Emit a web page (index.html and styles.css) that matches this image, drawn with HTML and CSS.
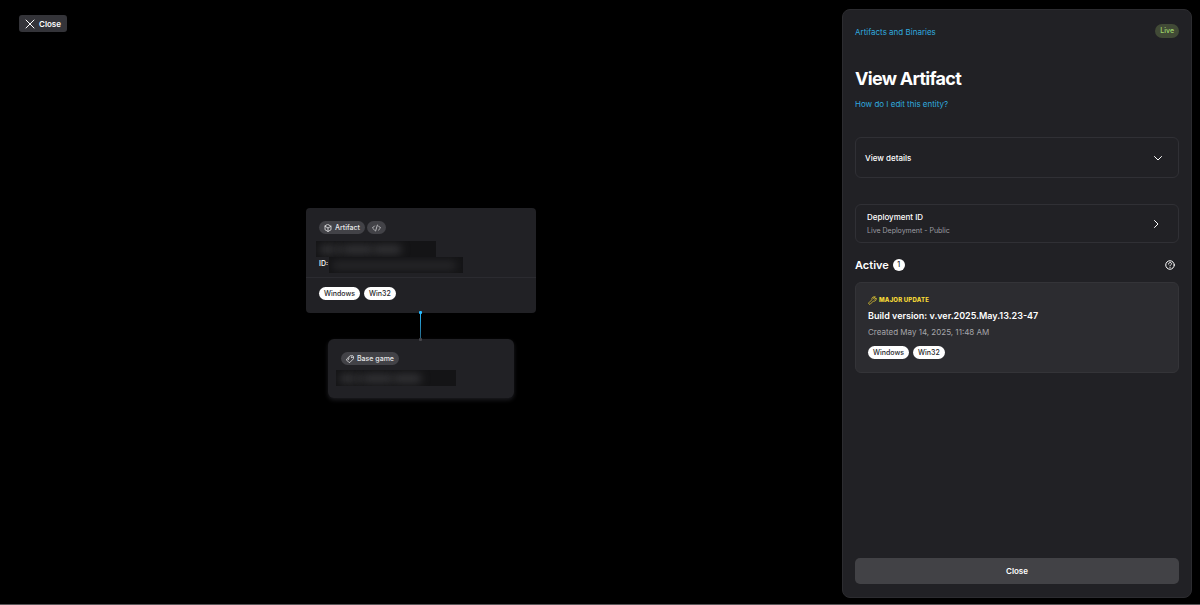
FILE: index.html
```html
<!DOCTYPE html>
<html lang="en">
<head>
	<meta charset="UTF-8">
	<meta name="viewport" content="width=device-width, initial-scale=1.0">
	<title>View Artifact</title>
	<link rel="stylesheet" href="styles.css">
</head>
<body>
	<div class="app">
		<main class="canvas">
			<button class="close-top" type="button">
				<svg class="icon-close" viewBox="0 0 10 10"><path d="M1 1l8 8M9 1l-8 8"/></svg>
				Close
			</button>

			<!-- graph nodes -->
			<section class="node node-artifact">
				<div class="node-head">
					<div class="tags">
						<span class="tag">
							<svg class="icon" viewBox="0 0 16 16"><path d="M8 1l6 3.500v7L8 15l-6-3.500v-7zM2 4.500L8 8l6-3.500M8 8v7"/></svg>
							Artifact
						</span>
						<span class="tag tag-code">
							<svg class="icon icon-code" viewBox="0 0 20 16"><path d="M5.500 3.500L1 8l4.500 4.500M14.500 3.500L19 8l-4.500 4.500M12 1.500l-4 13"/></svg>
						</span>
					</div>
					<div class="redacted redacted-name"><i></i><i></i><i></i><i></i></div>
					<div class="id-row">
						<span>ID:</span>
						<div class="redacted redacted-id"><i></i></div>
					</div>
				</div>
				<div class="node-foot">
					<span class="chip">Windows</span>
					<span class="chip">Win32</span>
				</div>
			</section>
			<section class="node node-game">
				<div class="tags">
					<span class="tag">
						<svg class="icon" viewBox="0 0 16 16"><path d="M9 1.500h5l1 1v5l-7.500 7.500-2-.500L1 10l.500-1.500zM6 6L4.500 9.500"/><circle cx="11.500" cy="4.500" r=".8"/></svg>
						Base game
					</span>
				</div>
				<div class="redacted redacted-name"><i></i><i></i><i></i><i></i></div>
			</section>
			<div class="edge"></div>
		</main>

		<aside class="panel">
			<div class="panel-top">
				<a class="link" href="#">Artifacts and Binaries</a>
				<span class="status">Live</span>
			</div>
			<h1>View Artifact</h1>
			<a class="link" href="#">How do I edit this entity?</a>

			<button class="row row-details" type="button">
				<span>View details</span>
				<svg class="chevron" viewBox="0 0 10 10"><path d="M1.500 3.500L5 7l3.500-3.500"/></svg>
			</button>

			<button class="row row-deployment" type="button">
				<span class="row-text">
					<span>Deployment ID</span>
					<small>Live Deployment - Public</small>
				</span>
				<svg class="chevron" viewBox="0 0 10 10"><path d="M3.500 1.500L7 5 3.500 8.500"/></svg>
			</button>

			<div class="active-head">
				<h2>Active</h2>
				<span class="count">1</span>
				<button class="help" type="button" aria-label="Help">
					<svg viewBox="0 0 20 20"><circle cx="10" cy="10" r="8.500"/><path d="M7 8c0-4 6-4 6-.500 0 2-3 2-3 4M10 14.500v.500"/></svg>
				</button>
			</div>

			<article class="build">
				<div class="update">
					<svg class="icon-wrench" viewBox="0 0 16 16"><path d="M12.500 1.500C9 .500 6 3 7 6.500L1.500 12c-1 1.500.500 3.500 2.500 2.500L9.500 9c3.500 1 6-2 5-5.500L12 6l-2-2z"/></svg>
					MAJOR UPDATE
				</div>
				<h3>Build version: v.ver.2025.May.13.23-47</h3>
				<p>Created May 14, 2025, 11:48 AM</p>
				<div class="chips">
					<span class="chip">Windows</span>
					<span class="chip">Win32</span>
				</div>
			</article>

			<button class="close-bottom" type="button">Close</button>
		</aside>
	</div>
</body>
</html>
```

FILE: styles.css
```css
* {
	box-sizing: border-box;
}

body {
	margin: 0;
	background: #000;
	color: #fff;
	font-family: Inter, "Liberation Sans", sans-serif;
	font-size: 8px;
	line-height: 12px;
}

h1, h2, h3, p {
	margin: 0;
}

button {
	border: 0;
	color: inherit;
	cursor: pointer;
	font: inherit;
}

svg {
	display: block;
	fill: none;
	flex: none;
	stroke: currentColor;
	stroke-linecap: round;
	stroke-linejoin: round;
}

.app {
	border-bottom: 1px solid #5a5558;
	display: flex;
	min-height: 100vh;
}

/* Canvas */

.canvas {
	flex: 1;
	padding: 15px 19px;
	position: relative;
}

.close-top {
	align-items: center;
	background: #343439;
	border-radius: 3px;
	display: flex;
	font-weight: 600;
	gap: 4px;
	height: 17px;
	padding: 0 6px;
}

.icon-close {
	height: 10px;
	width: 10px;
}

.node {
	background: #212125;
	position: absolute;
}

.node-artifact {
	border-radius: 4px;
	left: 306px;
	top: 208px;
	width: 230px;
}

.node-head {
	border-bottom: 1px solid #2b2b30;
	padding: 13px 13px 4px;
}

.node-foot {
	padding: 9px 13px 13px;
}

.node-foot, .chips, .tags {
	display: flex;
}

.node-foot, .chips {
	gap: 4px;
}

.tags {
	gap: 2px;
}

.tag {
	align-items: center;
	background: #424247;
	border-radius: 7px;
	color: #e8e8ea;
	display: flex;
	font-size: 7px;
	font-weight: 500;
	gap: 3px;
	height: 13px;
	padding: 0 5px;
}

.tag-code {
	padding: 0 5px;
}

.icon {
	height: 8px;
	stroke-width: 1.6;
	width: 8px;
}

.icon-code {
	width: 9px;
}

.chip {
	background: #fff;
	border-radius: 7px;
	color: #26262a;
	font-size: 7px;
	font-weight: 500;
	line-height: 13px;
	padding: 0 5px;
}

.redacted {
	align-items: center;
	background: #141416;
	display: flex;
	height: 16px;
	overflow: hidden;
}

.redacted i {
	background: #343437;
	border-radius: 3px;
	filter: blur(4px);
	height: 9px;
}

.redacted-name {
	margin: 7px 0 0 -3px;
	padding-left: 4px;
	width: 120px;
}

.redacted-name i:nth-child(1) {
	width: 15px;
}

.redacted-name i:nth-child(2) {
	width: 8px;
}

.redacted-name i:nth-child(3) {
	width: 30px;
}

.redacted-name i:nth-child(4) {
	width: 28px;
}

.id-row {
	display: flex;
	font-size: 7px;
	font-weight: 500;
	gap: 1px;
	line-height: 14px;
}

.redacted-id {
	padding-left: 3px;
	width: 134px;
}

.redacted-id i {
	background: #27272a;
	width: 124px;
}

.edge {
	background: linear-gradient(#26bbff, #26627e);
	height: 27px;
	left: 420px;
	position: absolute;
	top: 312px;
	width: 1px;
}

.edge::before, .edge::after {
	background: #26bbff;
	border-radius: 1px;
	content: "";
	height: 3px;
	left: -1px;
	position: absolute;
	top: -1px;
	width: 3px;
}

.edge::after {
	background: #45454a;
	top: 26px;
}

.node-game {
	border-radius: 6px;
	box-shadow: 0 2px 4px #1c1c20;
	left: 328px;
	padding: 13px 13px 12px;
	top: 339px;
	width: 186px;
}

.node-game .redacted-name {
	margin: 5px 0 0 -5px;
}

/* Side panel */

.panel {
	background: #212125;
	border: 1px solid #2c2c30;
	border-radius: 8px;
	display: flex;
	flex: 0 0 350px;
	flex-direction: column;
	margin: 9px 8px 6px 0;
	padding: 14px 12px 13px;
}

.panel-top {
	align-items: end;
	display: flex;
	justify-content: space-between;
	margin: 0 0 31px;
}

.link {
	align-self: flex-start;
	color: #30a9df;
	text-decoration: none;
}

.panel-top .link {
	align-self: flex-end;
}

.status {
	background: #414a36;
	border-radius: 7px;
	color: #9ed66b;
	font-size: 7px;
	font-weight: 500;
	line-height: 14px;
	padding: 0 5px;
}

h1 {
	font-size: 18px;
	font-weight: 700;
	letter-spacing: -0.04em;
	line-height: 20px;
	margin-bottom: 9px;
}

.row {
	align-items: center;
	background: transparent;
	border: 1px solid #303035;
	border-radius: 6px;
	display: flex;
	font-weight: 500;
	justify-content: space-between;
	text-align: left;
}

.row-details {
	margin-top: 27px;
	padding: 14px 15px 13px 9px;
}

.row-deployment {
	margin-top: 26px;
	padding: 6px 17px 5px 11px;
}

.row-text {
	display: flex;
	flex-direction: column;
	gap: 2px;
}

.row-text small {
	color: #9d9da2;
	font-size: 7px;
	font-weight: 400;
}

.chevron {
	height: 10px;
	width: 10px;
}

.active-head {
	align-items: center;
	display: flex;
	gap: 4px;
	margin: 14px 4px 9px 0;
}

h2 {
	font-size: 11px;
	font-weight: 600;
	line-height: 16px;
}

.count {
	background: #fff;
	border-radius: 50%;
	color: #212125;
	font-size: 7px;
	font-weight: 500;
	line-height: 12px;
	text-align: center;
	width: 12px;
}

.help {
	background: none;
	margin-left: auto;
	padding: 0;
}

.help svg {
	height: 10px;
	stroke-width: 2;
	width: 10px;
}

.build {
	background: #2c2c30;
	border: 1px solid #343438;
	border-radius: 6px;
	padding: 11px 12px 13px;
}

.update {
	align-items: center;
	color: #f5d936;
	display: flex;
	font-size: 6px;
	font-weight: 800;
	gap: 2px;
	letter-spacing: 0.03em;
}

.icon-wrench {
	height: 9px;
	stroke-width: 1.3;
	width: 9px;
}

h3 {
	font-size: 9px;
	font-weight: 600;
	line-height: 14px;
	margin-top: 3px;
}

.build p {
	color: #a6a6aa;
	margin: 3px 0 8px;
}

.close-bottom {
	background: #424246;
	border-radius: 5px;
	font-weight: 600;
	line-height: 12px;
	margin-top: auto;
	padding: 7px;
}
```
